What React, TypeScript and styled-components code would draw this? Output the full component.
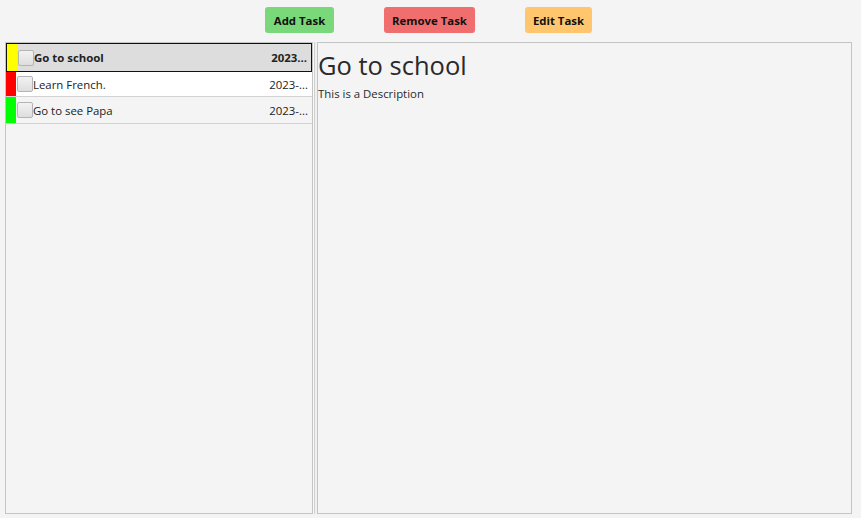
import React from "react";
import styled, { createGlobalStyle } from "styled-components";

const Global = createGlobalStyle`
  html, body { margin: 0; padding: 0; background: #f4f4f4; }
  body { font-family: "Open Sans", "Noto Sans", sans-serif; font-size: 11.4px; color: #333; }
  * { box-sizing: border-box; }
`;

const Page = styled.div`
  width: 861px;
  height: 518px;
  display: flex;
  flex-direction: column;
  padding: 7px 9px 4px 5px;
  background: #f4f4f4;
`;

const Toolbar = styled.div`
  display: flex;
  justify-content: center;
  gap: 50px;
  height: 26px;
  margin-bottom: 9px;
`;

const ActionButton = styled.button<{ $bg: string; $w: number }>`
  width: ${(p) => p.$w}px;
  height: 26px;
  padding: 0;
  border: none;
  border-radius: 3px;
  background: ${(p) => p.$bg};
  font-family: "Open Sans", "Noto Sans", sans-serif;
  font-weight: 700;
  font-size: 11.4px;
  color: #111;
  cursor: pointer;
`;

const Split = styled.div`
  flex: 1;
  display: flex;
  min-height: 0;
`;

const ListPane = styled.div`
  width: 308px;
  border: 1px solid #c4c4c4;
  background: #f4f4f4;
  display: flex;
  flex-direction: column;
`;

const Divider = styled.div`
  width: 4px;
  background: linear-gradient(to right, #fafafa 0, #fafafa 1px, #cfcfcf 1px, #cfcfcf 2px, #f0f0f0 2px);
`;

const DetailPane = styled.div`
  flex: 1;
  border: 1px solid #c4c4c4;
  background: #f4f4f4;
  padding: 3px 0;
`;

const Row = styled.div<{ $selected?: boolean; $bg: string; $h: number }>`
  display: flex;
  align-items: center;
  height: ${(p) => p.$h}px;
  background: ${(p) => p.$bg};
  border-bottom: 1px solid ${(p) => (p.$selected ? "#111" : "#d2d2d2")};
  ${(p) => (p.$selected ? "border: 1px solid #111;" : "")}
  font-weight: ${(p) => (p.$selected ? 700 : 400)};
  color: #222;
`;

const ColorBar = styled.div<{ $color: string }>`
  width: 10px;
  align-self: stretch;
  background: ${(p) => p.$color};
`;

const Check = styled.span`
  width: 16px;
  height: 16px;
  margin: 0 0 0 1px;
  border: 1px solid #b4b4b4;
  border-radius: 2px;
  background: linear-gradient(#f2f2f2, #dedede);
  flex-shrink: 0;
`;

const Name = styled.span`
  flex: 1;
  white-space: nowrap;
  overflow: hidden;
`;

const DateText = styled.span`
  padding-right: 4px;
  white-space: nowrap;
`;

const Title = styled.h1`
  margin: 0;
  font-weight: 400;
  font-size: 25.5px;
  line-height: 38px;
  color: #2a2a2a;
`;

const Desc = styled.p`
  margin: 2px 0 0;
  font-size: 11.4px;
  line-height: 16px;
  color: #2a2a2a;
`;

const tasks = [
  { name: "Go to school", color: "#ffff00", date: "2023...", bg: "#dddddd", selected: true, h: 29 },
  { name: "Learn French.", color: "#ff0000", date: "2023-...", bg: "#ffffff", h: 25 },
  { name: "Go to see Papa", color: "#00ff00", date: "2023-...", bg: "#f4f4f4", h: 27 },
];

export default function App() {
  return (
    <>
      <Global />
      <Page>
        <Toolbar>
          <ActionButton $bg="#79d879" $w={69}>Add Task</ActionButton>
          <ActionButton $bg="#f16e6e" $w={91}>Remove Task</ActionButton>
          <ActionButton $bg="#ffc66e" $w={67}>Edit Task</ActionButton>
        </Toolbar>
        <Split>
          <ListPane>
            {tasks.map((t) => (
              <Row key={t.name} $selected={t.selected} $bg={t.bg} $h={t.h}>
                <ColorBar $color={t.color} />
                <Check />
                <Name>{t.name}</Name>
                <DateText>{t.date}</DateText>
              </Row>
            ))}
          </ListPane>
          <Divider />
          <DetailPane>
            <Title>Go to school</Title>
            <Desc>This is a Description</Desc>
          </DetailPane>
        </Split>
      </Page>
    </>
  );
}
